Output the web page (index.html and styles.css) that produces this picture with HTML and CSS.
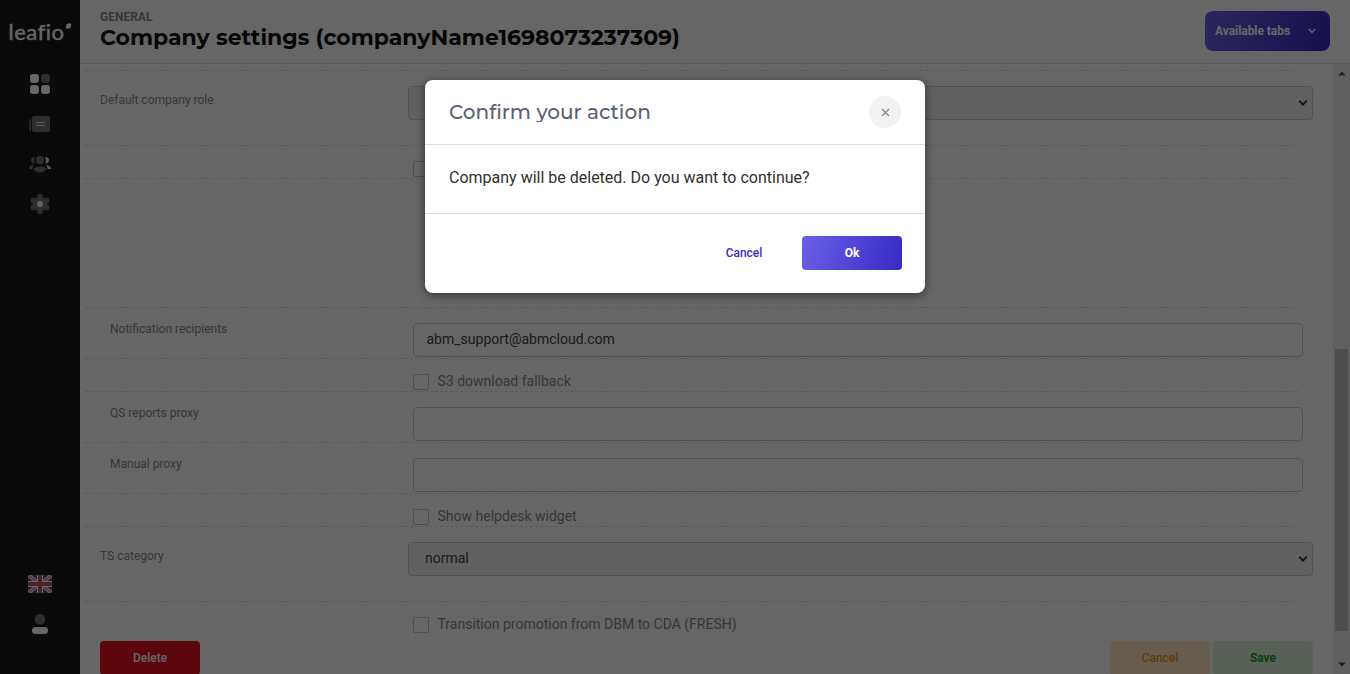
FILE: index.html
```html
<!DOCTYPE html>
<html lang="en">
<head>
<meta charset="utf-8">
<title>Company settings</title>
<link rel="stylesheet" href="styles.css">
</head>
<body>
<div class="app">
  <nav class="sidebar">
    <div class="logo"><span class="logo-text">leafio</span><svg class="leaf" width="5" height="6" viewBox="0 0 5 6"><path d="M0 5.500V3Q0 .5 2.200.5H5V2.500Q5 5.500 2.500 5.500Z" fill="#fff"/></svg></div>
    <svg class="nav-icon" viewBox="0 0 24 24"><g fill="#fff"><rect x="2" y="2" width="9" height="9" rx="3.2"/><rect x="2" y="13" width="9" height="9" rx="3.2"/><rect x="13" y="13" width="9" height="9" rx="3.2"/></g><rect x="13" y="2" width="9" height="9" rx="3.2" fill="#747474"/></svg>
    <svg class="nav-icon" viewBox="0 0 24 24"><rect x="4" y="4" width="18" height="16" rx="2" fill="#747474"/><path d="M3 7.200H1.500V18Q1.500 19.500 3 19.500Z" fill="#747474"/><path d="M8 10.500H17M8 13.500H17" stroke="#ddd" stroke-width="1"/></svg>
    <svg class="nav-icon" viewBox="0 0 24 24"><g fill="#747474"><circle cx="12" cy="8" r="4.200"/><ellipse cx="12" cy="17.300" rx="6.200" ry="2.900"/><path d="M7 5Q3 5 3 8.200Q3 11.300 6.500 11.500Q5.500 8 7 5ZM6 13Q1 13.500 1 17H4.500Q4.500 14.500 6 13Z"/></g><path d="M17 5Q21 5 21 8.200Q21 11.300 17.500 11.500Q18.500 8 17 5ZM18 13Q23 13.500 23 17H19.500Q19.500 14.500 18 13Z" fill="#ddd"/></svg>
    <svg class="nav-icon" viewBox="0 0 24 24"><g fill="#747474"><circle cx="12" cy="12" r="7.600"/><circle cx="12" cy="5" r="3"/><circle cx="12" cy="19" r="3"/><circle cx="5.700" cy="8.500" r="3"/><circle cx="18.300" cy="8.500" r="3"/><circle cx="5.700" cy="15.500" r="3"/><circle cx="18.300" cy="15.500" r="3"/></g><circle cx="12" cy="12" r="3" fill="#fff"/></svg>
    <span class="spacer"></span>
    <svg class="flag" viewBox="0 0 24 18"><rect width="24" height="18" rx="1" fill="#4a5aa8"/><path d="M0 0L24 18M24 0L0 18" stroke="#fff" stroke-width="3.600"/><path d="M0 0L24 18M24 0L0 18" stroke="#d45062" stroke-width="1.300"/><path d="M12 0V18M0 9H24" stroke="#fff" stroke-width="6"/><path d="M12 0V18M0 9H24" stroke="#cf5060" stroke-width="4"/></svg>
    <svg class="nav-icon user" viewBox="0 0 24 24"><circle cx="12" cy="7.300" r="5.200" fill="#747474"/><rect x="4" y="15" width="16" height="7" rx="3.500" fill="#fff"/></svg>
  </nav>
  <main class="main">
    <header class="topbar">
      <div class="titles"><div class="crumb">GENERAL</div><h1 class="title">Company settings (companyName1698073237309)</h1></div>
      <button class="tabs">Available tabs<svg width="8" height="6" viewBox="0 0 8 6"><path d="M.8 1L4 4.500L7.200 1" fill="none" stroke="#fff" stroke-width="1.200"/></svg></button>
    </header>
    <div class="content">
      <div class="form">
        <div class="row first"></div>
        <div class="row tall outer"><label class="label">Default company role</label><div class="control select"><span></span><svg class="caret" viewBox="0 0 10 8"><path d="M1.200 1.800L5 5.500L8.800 1.800" /></svg></div></div>
        <div class="row check"><span class="box"></span></div>
        <div class="row gap"></div>
        <div class="row"><label class="label">Notification recipients</label><div class="control">abm_support@abmcloud.com</div></div>
        <div class="row check"><span class="box"></span><span class="check-text">S3 download fallback</span></div>
        <div class="row"><label class="label">QS reports proxy</label><div class="control"></div></div>
        <div class="row"><label class="label">Manual proxy</label><div class="control"></div></div>
        <div class="row check"><span class="box"></span><span class="check-text">Show helpdesk widget</span></div>
        <div class="row tall outer"><label class="label">TS category</label><div class="control select"><span>normal</span><svg class="caret" viewBox="0 0 10 8"><path d="M1.200 1.800L5 5.500L8.800 1.800" /></svg></div></div>
        <div class="row check last"><span class="box"></span><span class="check-text">Transition promotion from DBM to CDA (FRESH)</span></div>
        <div class="actions"><button class="btn delete">Delete</button><button class="btn cancel">Cancel</button><button class="btn save">Save</button></div>
      </div>
      <div class="scrollbar"><svg width="8" height="5" viewBox="0 0 8 5"><path d="M0 4.500L4 .5L8 4.500Z" fill="#505050"/></svg><div class="thumb"></div><svg width="8" height="5" viewBox="0 0 8 5"><path d="M0 .5L4 4.500L8 .5Z" fill="#505050"/></svg></div>
    </div>
  </main>
</div>
<div class="overlay">
  <section class="modal">
    <div class="modal-head"><h2 class="modal-title">Confirm your action</h2><button class="close"><svg width="9" height="9" viewBox="0 0 9 9"><path d="M1 1L8 8M8 1L1 8" stroke="#858994" stroke-width="1.400"/></svg></button></div>
    <div class="modal-body">Company will be deleted. Do you want to continue?</div>
    <div class="modal-foot"><button class="btn link">Cancel</button><button class="btn ok">Ok</button></div>
  </section>
</div>
</body>
</html>
```

FILE: styles.css
```css
* { box-sizing: border-box; }
body { margin: 0; font-family: Roboto, "Liberation Sans", sans-serif; background: #fff; overflow: hidden; }
button { border: 0; font-family: inherit; padding: 0; }
h1, h2 { margin: 0; }
.app { display: flex; height: 674px; overflow: hidden; }
.sidebar { width: 80px; flex: none; background: #191919; display: flex; flex-direction: column; align-items: center; gap: 16px; padding: 20px 0 38px; }
.logo { height: 36px; width: 63px; display: flex; align-items: flex-start; color: #fff; }
.logo-text { font-family: Lato, sans-serif; font-size: 22px; line-height: 24px; letter-spacing: .5px; -webkit-text-stroke: .4px #fff; width: 57px; flex: none; }
.leaf { margin-top: 3px; flex: none; }
.nav-icon { width: 24px; height: 24px; flex: none; }
.spacer { flex: 1; }
.flag { width: 24px; height: 18px; margin-bottom: 3px; }
.main { flex: 1; min-width: 0; display: flex; flex-direction: column; }
.topbar { height: 64px; flex: none; display: flex; justify-content: space-between; padding: 10px 20px 0; border-bottom: 1px solid #e1e1e4; }
.crumb { font-size: 12px; line-height: 14px; font-weight: 700; color: #858b96; }
.title { font-family: Montserrat, Inter, sans-serif; font-size: 22px; line-height: 28px; font-weight: 700; color: #111; white-space: nowrap; }
.tabs { margin-top: 1px; width: 125px; height: 40px; border-radius: 8px; background: linear-gradient(110deg, #6c60e8, #3829c4); color: #fff; font-size: 12px; letter-spacing: -.05px; font-weight: 700; display: flex; align-items: center; justify-content: space-between; padding: 0 14px 0 10px; }
.content { flex: 1; display: flex; min-height: 0; }
.form { flex: 1; padding: 0 20px 0 5px; }
.row { height: 51px; width: 1213px; padding-left: 25px; display: flex; align-items: flex-start; background: repeating-linear-gradient(90deg, #dedee0 0 3px, transparent 3px 5px) left bottom / 100% 1px no-repeat; }
.row.first { height: 7px; }
.row.tall { height: 75px; }
.row.gap { height: 129px; }
.row.outer { padding-left: 15px; }
.label { width: 303px; flex: none; font-size: 12px; line-height: 14px; margin-top: 14px; color: #858b96; }
.outer .label { width: 308px; margin-top: 22px; }
.control { width: 890px; flex: none; height: 34px; margin-top: 15px; border: 1px solid #cbcdd0; border-radius: 4px; padding: 0 12.5px; font-size: 14px; line-height: 31px; color: #40444c; }
.select { width: 905px; background: #f2f2f2; display: flex; justify-content: space-between; align-items: center; padding: 0 4px 0 16px; }
.select span { line-height: 30px; margin-bottom: 2px; }
.caret { width: 10px; height: 8px; fill: none; stroke: #3c414c; stroke-width: 2; }
.row.check { height: 33px; padding-left: 328px; }
.row.last { height: 39px; background: none; }
.box { width: 16px; height: 16px; margin-top: 15px; border: 1px solid #c3c5c8; border-radius: 1px; }
.check-text { margin: 14px 0 0 8.5px; font-size: 14px; line-height: 16px; color: #858b96; }
.actions { display: flex; gap: 3px; padding-left: 15px; }
.btn { width: 100px; height: 34px; border-radius: 4px; font-size: 12px; font-weight: 500; }
.delete { background: #e51320; color: #fff; margin-right: auto; }
.cancel { background: #ffe8c4; color: #f09a20; }
.save { background: #dcefdc; color: #239a29; font-weight: 700; }
.scrollbar { width: 17px; background: #f1f1f1; display: flex; flex-direction: column; align-items: center; justify-content: space-between; padding: 7px 0; }
.thumb { width: 13px; height: 282px; background: #c1c1c1; margin: auto 0 31px; }
.overlay { position: absolute; inset: 0; background: rgba(0, 0, 0, .6); display: flex; justify-content: center; align-items: flex-start; padding-top: 80px; }
.modal { width: 500px; height: 213px; background: #fff; border-radius: 8px; box-shadow: 0 2px 10px rgba(0, 0, 0, .5); }
.modal-head { height: 65px; border-bottom: 1px solid #dcdbe8; display: flex; justify-content: space-between; align-items: center; padding: 0 24px; }
.modal-title { font-family: Montserrat, Inter, sans-serif; font-size: 20px; line-height: 20px; overflow: hidden; font-weight: 500; color: #5a6072; white-space: nowrap; }
.close { width: 32px; height: 32px; border-radius: 50%; background: #f2f2f2; display: flex; align-items: center; justify-content: center; }
.modal-body { height: 69px; border-bottom: 1px solid #dcdbe8; padding: 22px 24px; font-size: 16px; line-height: 21px; color: #303030; }
.modal-foot { display: flex; justify-content: flex-end; gap: 8px; padding: 22px 23px 0; }
.link { background: none; color: #3a2bc4; }
.ok { color: #fff; font-weight: 700; background: linear-gradient(110deg, #6c60e8, #3829c4); }
```
